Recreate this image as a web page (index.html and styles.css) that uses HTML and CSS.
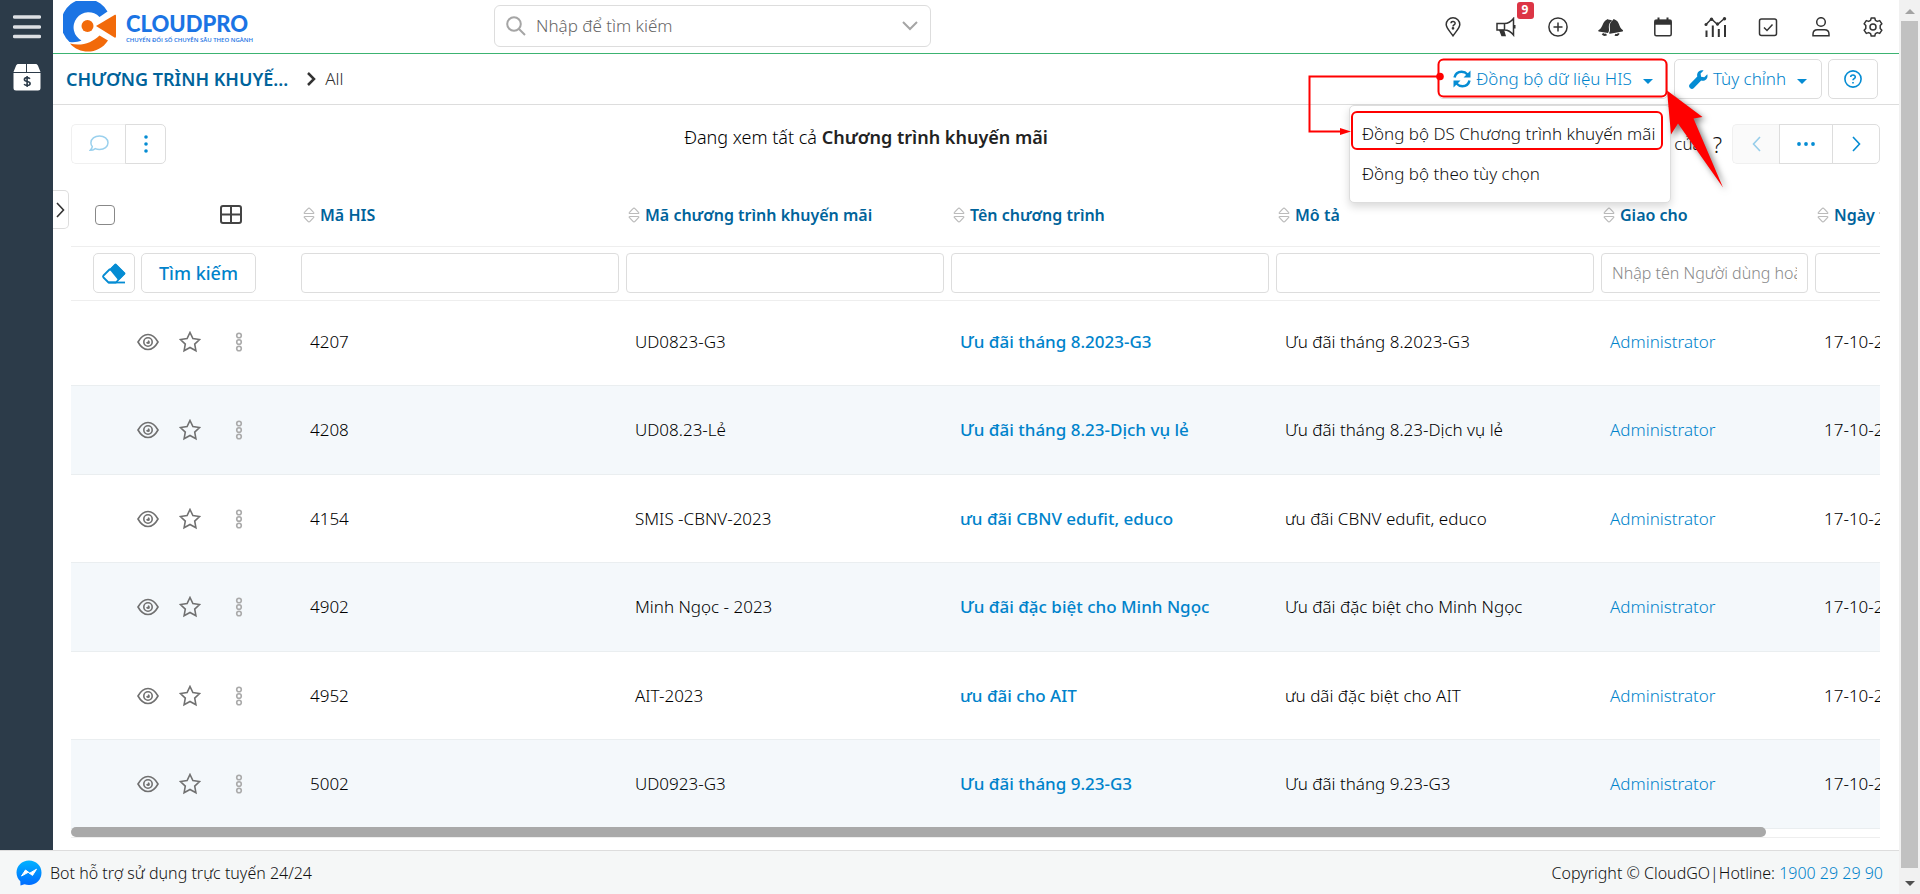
FILE: index.html
```html
<!DOCTYPE html>
<html lang="vi">
<head>
<meta charset="utf-8">
<title>Chương trình khuyến mãi</title>
<link rel="stylesheet" href="styles.css">
</head>
<body>
<svg class="defs" aria-hidden="true">
  <symbol id="i-eye" viewBox="0 0 22 18"><path d="M1 9C3.500 4.500 7 1.500 11 1.500S18.500 4.500 21 9c-2.500 4.500-6 7.500-10 7.500S3.500 13.500 1 9z"/><circle cx="11" cy="9" r="4.200"/><path d="M11 7.300a1.900 1.900 0 1 1-1.900 2 1.800 1.800 0 0 0 1.900-2z" fill="currentColor" stroke="none"/></symbol>
  <symbol id="i-star" viewBox="0 0 22 22"><path d="M11 1.500l2.900 6.100 6.700.9-4.900 4.600 1.200 6.600L11 16.500l-5.900 3.200 1.200-6.600L1.400 8.500l6.700-.9z"/></symbol>
  <symbol id="i-drag" viewBox="0 0 8 20"><circle cx="4" cy="3.500" r="2.300"/><circle cx="4" cy="10" r="2.300"/><circle cx="4" cy="16.500" r="2.300"/></symbol>
  <symbol id="i-sort" viewBox="0 0 12 16"><path d="M2 6.500h8c1 0 1-.7.500-1.200L7 1.600a1.300 1.300 0 0 0-2 0L1.500 5.300C1 5.800 1 6.500 2 6.500zM2 9.500h8c1 0 1 .7.500 1.200L7 14.400a1.300 1.300 0 0 1-2 0l-3.500-3.700C1 10.200 1 9.500 2 9.500z"/></symbol>
</svg>
<div class="window">
<div class="app">
  <nav class="sidebar" aria-label="Menu">
    <button class="bare" aria-label="Mở menu"><svg width="28" height="24" viewBox="0 0 28 24"><path d="M1.500 2h25M1.500 12h25M1.500 21.500h25" stroke="#dcdfe3" stroke-width="3.500" stroke-linecap="round"/></svg></button>
    <a href="#" class="side-link" aria-label="Chương trình khuyến mãi"><svg width="28" height="28" viewBox="0 0 28 28"><path d="M5.500 1H13v8H.500L3 2.700C3.500 1.500 4.300 1 5.500 1zM14 1h8.500c1.200 0 2 .5 2.500 1.700L27.500 9H14zM.500 10h27v15a2.500 2.500 0 0 1-2.500 2.500H3A2.500 2.500 0 0 1 .500 25z" fill="#fff"/><path d="M17 15.800c-.6-.8-1.700-1.200-2.900-1.200-1.600 0-2.700.7-2.700 1.900 0 2.800 5.700 1.200 5.700 4 0 1.300-1.200 2-2.900 2-1.300 0-2.500-.5-3.100-1.400M14.100 13v11" fill="none" stroke="#2c3b49" stroke-width="1.600"/></svg></a>
  </nav>
  <header class="topbar">
    <a href="#" class="logo" aria-label="CloudPro">
      <svg width="54" height="52" viewBox="0 0 54 52"><path d="M44.500 10.500A24.700 24.700 0 1 0 6.500 41C11 41.500 15 41 18.500 39.500A15 15 0 1 1 36.500 16z" fill="#1b74e4"/><path d="M7 42.500c11 3 22-.5 29.500-8l8.500 5C36 53.500 17 54 7 42.500z" fill="#f26a0a"/><path d="M33 25L51.500 14c1-.5 1.500 0 1.500 1v20c0 1.500-.5 2-1.500 1.500z" fill="#f26a0a"/><circle cx="24.500" cy="25" r="6" fill="#f26a0a"/></svg>
      <span class="logo-text"><span class="logo-name">CLOUDPRO</span><span class="logo-tag">CHUYỂN ĐỔI SỐ CHUYÊN SÂU THEO NGÀNH</span></span>
    </a>
    <label class="search">
      <svg width="20" height="20" viewBox="0 0 20 20" fill="none" stroke="#a5a5a5" stroke-width="2"><circle cx="8" cy="8" r="6.800"/><path d="M13 13l6 6"/></svg>
      <input type="text" placeholder="Nhập để tìm kiếm" aria-label="Nhập để tìm kiếm">
      <svg width="16" height="10" viewBox="0 0 16 10" fill="none" stroke="#a5a5a5" stroke-width="2"><path d="M1 1l7 7 7-7"/></svg>
    </label>
    <div class="tools">
      <button class="bare" aria-label="Hướng dẫn"><svg class="ico" viewBox="0 0 20 20"><path d="M10 18.800C7 14.500 3.200 11 3.200 7.600a6.800 6.800 0 0 1 13.600 0c0 3.400-3.800 6.900-6.800 11.200z"/><path d="M8 6.300c.1-2.400 4.200-2.300 4.100.1 0 1.500-2.100 1.600-2.100 3"/><circle cx="10" cy="11.300" r=".6" fill="currentColor"/></svg></button>
      <button class="bare alert" aria-label="Thông báo, 9 mới"><svg class="ico" viewBox="0 0 20 20"><path d="M1 6.500h7.500c3.500 0 6.500-1.800 9-5v16.500c-2.500-3.200-5.500-5-9-5H1z M8.500 6.500v6"/><path d="M4 13.500h3.500l1.500 5h-3z" fill="currentColor"/><path d="M18.500 8v3.500" stroke-width="2"/></svg><span class="badge">9</span></button>
      <button class="bare" aria-label="Tạo nhanh"><svg class="ico" viewBox="0 0 20 20"><circle cx="10" cy="10" r="9.100"/><path d="M10 5.500v9M5.500 10h9"/></svg></button>
      <button class="bare" aria-label="Chuông"><svg class="ico wide" viewBox="0 0 25 20"><path d="M9 2.500l1-.5.500.8c1.500-.3 2.600.1 3.700.9-3.500 2-3.600 5-3.200 8.300.2 1.700-.2 3-1 4L.700 14.500c-.8-.3-.6-1.100 0-1.500C5.500 10.500 4 4.500 9 2.500z" fill="currentColor" stroke="none"/><path d="M15.500 2l1.200.5c5.300 2 3.800 7.500 8 10.500.6.500.5 1.200-.2 1.400l-12.600 2.300c-.8.100-1-.6-.6-1.200 2.300-3-2.300-8.500 3.700-12.500z" fill="currentColor" stroke="none"/><path d="M4.500 16.700c1 1.300 2.500 1.500 4 .6M17 17.600c1.500.9 3 .4 3.800-1.200" stroke-width="2"/></svg></button>
      <button class="bare" aria-label="Lịch"><svg class="ico" viewBox="0 0 20 20"><rect x="1.800" y="3.200" width="16.400" height="15.600" rx="1.500"/><path d="M2.500 3.500h15V7h-15z" fill="currentColor"/><path d="M5.500.5v4M14.500.5v4" stroke-width="2"/></svg></button>
      <button class="bare" aria-label="Báo cáo"><svg class="ico wide" viewBox="0 0 22 20"><path d="M1 8l6-6 6 5.500L20.500 1"/><g fill="currentColor" stroke="none"><circle cx="1.500" cy="7.500" r="1.500"/><circle cx="7" cy="2.200" r="1.700"/><circle cx="13" cy="7" r="1.700"/><circle cx="20" cy="1.700" r="1.700"/></g><path d="M2 13.500V20M8.300 8.500V20M14.300 12V20M20.500 8V20" stroke-width="2"/></svg></button>
      <button class="bare" aria-label="Công việc"><svg class="ico" viewBox="0 0 20 20"><rect x="1.500" y="2" width="17" height="16.500" rx="2"/><path d="M6 10.500l3 3 5.500-6"/></svg></button>
      <button class="bare" aria-label="Tài khoản"><svg class="ico" viewBox="0 0 20 20"><circle cx="10" cy="5" r="4.300"/><path d="M2 18.800v-1.600c0-3 2-4.400 4.500-4.400h7c2.500 0 4.500 1.400 4.500 4.400v1.600z"/></svg></button>
      <button class="bare" aria-label="Cài đặt"><svg class="ico" viewBox="0 0 20 20"><circle cx="10" cy="10" r="3"/><path d="M8.200 1h3.600l.6 2.400 1.900 1 2.400-.8 2.200 3.200-1.700 1.800v2.800l1.700 1.800-2.200 3.200-2.400-.8-1.900 1-.6 2.400H8.200l-.6-2.400-1.900-1-2.400.8-2.200-3.200 1.700-1.800V8.600L1.100 6.800l2.200-3.200 2.400.8 1.900-1z" stroke-linejoin="round"/></svg></button>
    </div>
  </header>
  <main class="content">
    <div class="titlebar">
      <h1>CHƯƠNG TRÌNH KHUYẾ...</h1>
      <svg width="9" height="14" viewBox="0 0 9 14" fill="none" stroke="#333" stroke-width="2.500"><path d="M1 1l6 6-6 6"/></svg>
      <span class="crumb">All</span>
      <div class="actions">
        <div class="sync">
          <button class="btn"><svg width="18" height="18" viewBox="0 0 18 18" fill="none" stroke="#058cd3" stroke-width="2.500"><path d="M1.500 7.500C2.300 4 5.200 1.800 8.600 1.800c2.400 0 4.300.9 6 2.700M16.500 10.500c-.8 3.500-3.700 5.700-7.100 5.700-2.400 0-4.300-.9-6-2.700"/><path d="M17.500.5v7h-7zM.5 17.500v-7h7z" fill="#058cd3" stroke="none"/></svg><span>Đồng bộ dữ liệu HIS</span><i class="caret"></i></button>
          <div class="menu"><a href="#">Đồng bộ DS Chương trình khuyến mãi</a><a href="#">Đồng bộ theo tùy chọn</a></div>
          <svg class="marks" width="420" height="140" viewBox="1304 56 420 140" fill="none" stroke="#f00" stroke-width="2"><rect x="1438.500" y="59.500" width="228" height="37" rx="5"/><rect x="1352" y="112" width="310" height="37" rx="5"/><path d="M1440 76.500H1309.500V131.500H1342"/><path d="M1340 128v7l11-3.500z" fill="#f00" stroke="none"/><circle cx="1440" cy="76.500" r="3.800" fill="#f00" stroke="none"/><path class="pointer" d="M1667 90.500L1702.500 117l-9 1.500 29.500 69-45-64-7 11z" fill="#f00" stroke="none"/></svg>
        </div>
        <button class="btn custom"><svg width="19" height="19" viewBox="0 0 19 19"><path d="M18.300 4.300l-3 3-3.200-.6-.5-3.100 3-3C12 -.3 9 1 8.300 3.800c-.3 1.100-.2 2 0 2.800L1 14a2.600 2.600 0 0 0 3.900 3.900l7.300-7.300c4 1 7.200-2.200 6.100-6.300z" fill="#058cd3"/></svg><span>Tùy chỉnh</span><i class="caret"></i></button>
        <button class="btn help" aria-label="Trợ giúp"><svg width="18" height="18" viewBox="0 0 18 18" fill="none" stroke="#058cd3" stroke-width="1.600"><circle cx="9" cy="9" r="8.100"/><path d="M6.700 7c.1-2.700 4.700-2.600 4.600 0 0 1.600-2.300 1.700-2.300 3.300M9 12v1.600"/></svg></button>
      </div>
    </div>
    <button class="handle" aria-label="Mở bộ lọc"><svg width="9" height="16" viewBox="0 0 9 16" fill="none" stroke="#333" stroke-width="1.600"><path d="M1 1l6.500 7L1 15"/></svg></button>
    <div class="listview">
      <div class="toolbar">
        <div class="group">
          <button class="seg off comment" aria-label="Bình luận"><svg width="20" height="18" viewBox="0 0 20 18" fill="none" stroke="#058cd3" stroke-width="1.500"><path d="M10.500 1c4.800 0 8.500 2.800 8.500 6.700s-3.700 6.800-8.500 6.800c-1.500 0-3-.3-4.200-.9-1.300 1-2.900 1.700-5.100 1.700 1-1 1.900-2.100 2.100-3.700C2.300 10.500 1.900 9.300 1.900 7.700 1.900 3.800 5.700 1 10.500 1z"/></svg></button>
          <button class="seg more" aria-label="Thêm"><svg width="4" height="18" viewBox="0 0 4 18" fill="#058cd3"><circle cx="2" cy="2" r="1.800"/><circle cx="2" cy="9" r="1.800"/><circle cx="2" cy="16" r="1.800"/></svg></button>
        </div>
        <p class="viewing">Đang xem tất cả <b>Chương trình khuyến mãi</b></p>
        <div class="pager">
          <span class="of">của</span><span class="total">?</span>
          <div class="group">
            <button class="seg off prev" aria-label="Trang trước"><svg width="9" height="16" viewBox="0 0 9 16" fill="none" stroke="#058cd3" stroke-width="1.600"><path d="M8 1L1.500 8 8 15"/></svg></button>
            <button class="seg dots" aria-label="Chọn trang"><svg width="18" height="4" viewBox="0 0 18 4" fill="#058cd3"><circle cx="2" cy="2" r="1.900"/><circle cx="9" cy="2" r="1.900"/><circle cx="16" cy="2" r="1.900"/></svg></button>
            <button class="seg next" aria-label="Trang sau"><svg width="9" height="16" viewBox="0 0 9 16" fill="none" stroke="#058cd3" stroke-width="1.600"><path d="M1 1l6.500 7L1 15"/></svg></button>
          </div>
        </div>
      </div>
      <div class="tablewrap">
        <table>
          <colgroup><col class="c-act"><col class="c-main"><col class="c-main"><col class="c-main"><col class="c-main"><col class="c-user"><col class="c-date"></colgroup>
          <thead>
            <tr class="heads">
              <th><div class="headtools"><input type="checkbox" aria-label="Chọn tất cả"><svg width="22" height="19" viewBox="0 0 22 19" fill="none" stroke="#444" stroke-width="2"><rect x="1" y="1" width="20" height="17" rx="2"/><path d="M11 1v17M1 9.500h20"/></svg></div></th>
              <th><svg class="sort"><use href="#i-sort"/></svg>Mã HIS</th>
              <th><svg class="sort"><use href="#i-sort"/></svg>Mã chương trình khuyến mãi</th>
              <th><svg class="sort"><use href="#i-sort"/></svg>Tên chương trình</th>
              <th><svg class="sort"><use href="#i-sort"/></svg>Mô tả</th>
              <th><svg class="sort"><use href="#i-sort"/></svg>Giao cho</th>
              <th><svg class="sort"><use href="#i-sort"/></svg>Ngày tạo</th>
            </tr>
            <tr class="filters">
              <td><div class="filtertools"><button class="btn eraser" aria-label="Xóa bộ lọc"><svg width="24" height="21" viewBox="0 0 24 21"><path d="M8 7L13.500 1.500l9 9L17 16l-3 3.500H6.500L1.500 14.500a1.500 1.500 0 0 1 0-2L8 6" fill="none" stroke="#058cd3" stroke-width="1.800" stroke-linejoin="round"/><path d="M7.500 6.500L12.500 1.500a1.500 1.500 0 0 1 2 0l8 8a1.500 1.500 0 0 1 0 2l-6 6z" fill="#058cd3"/><path d="M6.500 19.500H23" stroke="#058cd3" stroke-width="1.800"/></svg></button><button class="btn find">Tìm kiếm</button></div></td>
              <td><input class="field" type="text" aria-label="Lọc Mã HIS"></td>
              <td><input class="field" type="text" aria-label="Lọc Mã chương trình khuyến mãi"></td>
              <td><input class="field" type="text" aria-label="Lọc Tên chương trình"></td>
              <td><input class="field" type="text" aria-label="Lọc Mô tả"></td>
              <td><input class="field" type="text" placeholder="Nhập tên Người dùng hoặc" aria-label="Lọc Giao cho"></td>
              <td><input class="field" type="text" aria-label="Lọc Ngày tạo"></td>
            </tr>
          </thead>
          <tbody>
            <tr><td><div class="rowtools"><svg class="eye"><use href="#i-eye"/></svg><svg class="star"><use href="#i-star"/></svg><svg class="drag"><use href="#i-drag"/></svg></div></td><td>4207</td><td>UD0823-G3</td><td><a class="name" href="#">Ưu đãi tháng 8.2023-G3</a></td><td>Ưu đãi tháng 8.2023-G3</td><td><a href="#">Administrator</a></td><td>17-10-2023</td></tr>
            <tr><td><div class="rowtools"><svg class="eye"><use href="#i-eye"/></svg><svg class="star"><use href="#i-star"/></svg><svg class="drag"><use href="#i-drag"/></svg></div></td><td>4208</td><td>UD08.23-Lẻ</td><td><a class="name" href="#">Ưu đãi tháng 8.23-Dịch vụ lẻ</a></td><td>Ưu đãi tháng 8.23-Dịch vụ lẻ</td><td><a href="#">Administrator</a></td><td>17-10-2023</td></tr>
            <tr><td><div class="rowtools"><svg class="eye"><use href="#i-eye"/></svg><svg class="star"><use href="#i-star"/></svg><svg class="drag"><use href="#i-drag"/></svg></div></td><td>4154</td><td>SMIS -CBNV-2023</td><td><a class="name" href="#">ưu đãi CBNV edufit, educo</a></td><td>ưu đãi CBNV edufit, educo</td><td><a href="#">Administrator</a></td><td>17-10-2023</td></tr>
            <tr><td><div class="rowtools"><svg class="eye"><use href="#i-eye"/></svg><svg class="star"><use href="#i-star"/></svg><svg class="drag"><use href="#i-drag"/></svg></div></td><td>4902</td><td>Minh Ngọc - 2023</td><td><a class="name" href="#">Ưu đãi đặc biệt cho Minh Ngọc</a></td><td>Ưu đãi đặc biệt cho Minh Ngọc</td><td><a href="#">Administrator</a></td><td>17-10-2023</td></tr>
            <tr><td><div class="rowtools"><svg class="eye"><use href="#i-eye"/></svg><svg class="star"><use href="#i-star"/></svg><svg class="drag"><use href="#i-drag"/></svg></div></td><td>4952</td><td>AIT-2023</td><td><a class="name" href="#">ưu đãi cho AIT</a></td><td>ưu dãi đặc biệt cho AIT</td><td><a href="#">Administrator</a></td><td>17-10-2023</td></tr>
            <tr><td><div class="rowtools"><svg class="eye"><use href="#i-eye"/></svg><svg class="star"><use href="#i-star"/></svg><svg class="drag"><use href="#i-drag"/></svg></div></td><td>5002</td><td>UD0923-G3</td><td><a class="name" href="#">Ưu đãi tháng 9.23-G3</a></td><td>Ưu đãi tháng 9.23-G3</td><td><a href="#">Administrator</a></td><td>17-10-2023</td></tr>
          </tbody>
        </table>
        <div class="hscroll"><div class="hthumb"></div></div>
      </div>
    </div>
  </main>
  <footer class="footer">
    <svg width="26" height="26" viewBox="0 0 26 26"><defs><linearGradient id="mg" x1="0" y1="0" x2="0" y2="1"><stop offset="0" stop-color="#00b2ff"/><stop offset="1" stop-color="#006aff"/></linearGradient></defs><path d="M13 .5C6 .5.500 5.600.500 12.500c0 3.600 1.500 6.700 3.800 8.800l.2 4.200 4-1.200c1.400.4 2.900.6 4.500.6 7 0 12.500-5.200 12.500-12.200S20 .5 13 .5z" fill="url(#mg)"/><path d="M5.500 16l4-6 4.200 3.200 6.800-4-4 6.200-4.300-3.100z" fill="#fff" stroke="#fff" stroke-linejoin="round"/></svg>
    <span>Bot hỗ trợ sử dụng trực tuyến 24/24</span>
    <span class="copy">Copyright © CloudGO|Hotline: <a href="#">1900 29 29 90</a></span>
  </footer>
</div>
<div class="vscroll" aria-hidden="true"><i class="up"></i><div class="vthumb"></div><i class="down"></i></div>
</div>
</body>
</html>
```
FILE: styles.css
```css
* { box-sizing: border-box; }
body { margin: 0; font-family: "Noto Sans", sans-serif; font-size: 17px; font-weight: 300; line-height: 24px; color: #000; background: #fff; }
a { color: #0083cb; text-decoration: none; }
button, input { font: inherit; color: inherit; }
button { padding: 0; cursor: pointer; }
svg { display: block; flex: none; }
.defs { position: absolute; width: 0; height: 0; }
.window { display: flex; min-height: 100vh; }
.app { flex: 1; min-width: 0; display: grid; grid-template: auto 1fr auto / 53px minmax(0, 1fr); }
.bare { border: 0; background: none; display: flex; }

.sidebar { grid-row: 1 / 3; background: #2c3b49; display: flex; flex-direction: column; align-items: center; gap: 24px; padding-top: 15px; }

.topbar { display: flex; align-items: center; height: 54px; padding: 0 16px 0 10px; border-bottom: 1px solid #3cb371; }
.logo { display: flex; align-items: center; gap: 9px; width: 431px; }
.logo-text { display: flex; flex-direction: column; padding-top: 3px; color: #1b74e4; font-weight: 600; }
.logo-name { font-family: Lato, sans-serif; font-size: 22px; line-height: 24px; font-weight: 900; }
.logo-tag { font-family: "Open Sans", sans-serif; font-size: 6px; line-height: 9px; white-space: nowrap; }
.search { display: flex; align-items: center; width: 437px; height: 42px; margin-bottom: 1px; padding: 0 12px 0 11px; border: 1px solid #ddd; border-radius: 6px; gap: 8px; }
.search input { flex: 1; min-width: 0; border: 0; outline: 0; background: none; }
.search input::placeholder { color: #666; opacity: 1; }
.tools { margin-left: auto; width: 440px; display: flex; justify-content: space-between; color: #333; }
.tools .bare { width: 20px; justify-content: center; }
.ico { width: 20px; height: 20px; fill: none; stroke: currentColor; stroke-width: 1.5; }
.ico.wide { width: 25px; }
.alert { position: relative; }
.badge { position: absolute; left: 21px; top: -15px; width: 17px; height: 17px; border-radius: 3px; background: #dc3545; color: #fff; font-size: 12px; line-height: 16px; font-weight: 700; }

.content { position: relative; min-width: 0; }
.titlebar { display: flex; align-items: center; height: 51px; padding: 0 21px 0 13px; border-bottom: 1px solid #ddd; }
h1 { margin: 0 19px 0 0; font-size: 18px; font-weight: 600; color: #00639b; }
.crumb { margin-left: 9px; color: #333; }
.actions { margin-left: auto; display: flex; gap: 6px; }
.btn { height: 40px; display: flex; align-items: center; justify-content: center; background: #fff; border: 1px solid #ddd; border-radius: 5px; color: #0083cb; }
.actions .btn { gap: 5px; }
.caret { border: 5px solid transparent; border-top-color: #058cd3; border-bottom: 0; margin: 4px 0 0 6px; }
.sync { position: relative; width: 230px; }
.sync .btn { width: 100%; }
.custom { width: 148px; }
.help { width: 50px; }
.menu { position: absolute; z-index: 2; right: -3px; top: 46px; width: 322px; padding: 8px 0; background: #fff; border: 1px solid #ddd; border-radius: 5px; box-shadow: 0 4px 8px rgba(0,0,0,.15); }
.menu a { display: block; padding: 8px 12px; color: #111; white-space: nowrap; }
.marks { position: absolute; z-index: 3; right: -56px; top: -3px; pointer-events: none; overflow: visible; }
.pointer { filter: drop-shadow(3px 3px 3px rgba(0,0,0,.5)); }
.handle { position: absolute; left: 0; top: 136px; width: 16px; height: 39px; display: flex; align-items: center; justify-content: center; background: #fff; border: 1px solid #ddd; border-left: 0; border-radius: 0 5px 5px 0; }

.listview { padding: 19px 19px 12px 18px; }
.toolbar { display: grid; grid-template-columns: 95px 1fr 314px; height: 40px; }
.group { display: flex; }
.seg { height: 40px; display: flex; align-items: center; justify-content: center; background: #fff; border: 1px solid #ddd; margin-left: -1px; }
.seg:first-child { margin-left: 0; border-radius: 5px 0 0 5px; border-right: 0; }
.seg:last-child { border-radius: 0 5px 5px 0; }
.seg.off { border-color: #f0f0f0; }
.seg.off svg { opacity: .4; }
.comment { width: 55px; }
.more { width: 41px; }
.prev { width: 48px; background: #fafafa; }
.dots { width: 54px; }
.next { width: 48px; }
.viewing { margin: 0; text-align: center; font-size: 18px; line-height: 26px; }
.viewing b { font-weight: 600; color: #222; }
.pager { display: flex; justify-content: flex-end; align-items: center; color: #111; }
.total { font-size: 22px; margin: 0 10px 0 11px; }

.tablewrap { margin-top: 22px; overflow: hidden; }
table { width: 1889px; table-layout: fixed; border-collapse: separate; border-spacing: 0; }
.c-act { width: 226px; }
.c-main { width: 325px; }
.c-user { width: 214px; }
.c-date { width: 149px; }
th { height: 61px; padding: 0 6px 3px; text-align: left; font-size: 16px; font-weight: 600; color: #00639b; border-bottom: 1px solid #eee; white-space: nowrap; }
.headtools { display: flex; align-items: center; padding: 0 49px 0 18px; justify-content: space-between; }
.headtools input { appearance: none; width: 20px; height: 20px; margin: 0; border: 1px solid #888; border-radius: 4px; background: #fff; }
.sort { display: inline-block; vertical-align: -2px; width: 12px; height: 16px; margin-right: 5px; fill: none; stroke: #bbb; stroke-width: 1.2; }
.filters td { height: 54px; padding: 6px 3px 0 4px; vertical-align: top; border-bottom: 1px solid #eee; }
.filtertools { display: flex; gap: 6px; padding-left: 18px; }
.eraser { width: 42px; }
.find { width: 115px; font-weight: 500; font-size: 18px; }
.field { display: block; width: 100%; height: 40px; padding: 0 10px; border: 1px solid #ddd; border-radius: 4px; font-size: 16px; background: #fff; }
.field::placeholder { color: #888; opacity: 1; }
tbody td { height: 88px; padding: 0 13px; border-bottom: 1px solid #eaeef0; white-space: nowrap; }
tbody tr:first-child td { height: 85px; padding-bottom: 3px; }
tbody tr:nth-child(even) td { height: 89px; background: #f4f8fb; }
.name { font-weight: 500; }
.rowtools { display: flex; align-items: center; padding-left: 53px; fill: none; color: #707070; stroke: currentColor; stroke-width: 1.6; }
.eye { width: 22px; height: 18px; }
.star { width: 22px; height: 22px; margin-left: 20px; }
.drag { width: 8px; height: 20px; margin-left: 34px; color: #aaa; }
.hscroll { position: relative; height: 11px; margin-top: -2px; border-bottom: 1px solid #eee; }
.hthumb { width: 1695px; max-width: 94%; height: 10px; border-radius: 5px; background: #a9a9a9; }

.footer { grid-column: 1 / 3; height: 45px; display: flex; align-items: center; gap: 8px; padding: 0 16px; background: #f5f7f7; border-top: 1px solid #ddd; font-size: 16px; color: #111; }
.copy { margin-left: auto; }

.vscroll { width: 21px; padding: 0 2px; background: #f1f1f1; display: flex; flex-direction: column; align-items: center; }
.vthumb { flex: 1; width: 17px; background: #c1c1c1; margin: 7px 0 13px; }
.up { border: 5px solid transparent; border-bottom-color: #a3a3a3; border-top: 0; margin-top: 9px; }
.down { border: 5px solid transparent; border-top-color: #505050; border-bottom: 0; margin-bottom: 9px; }
```
